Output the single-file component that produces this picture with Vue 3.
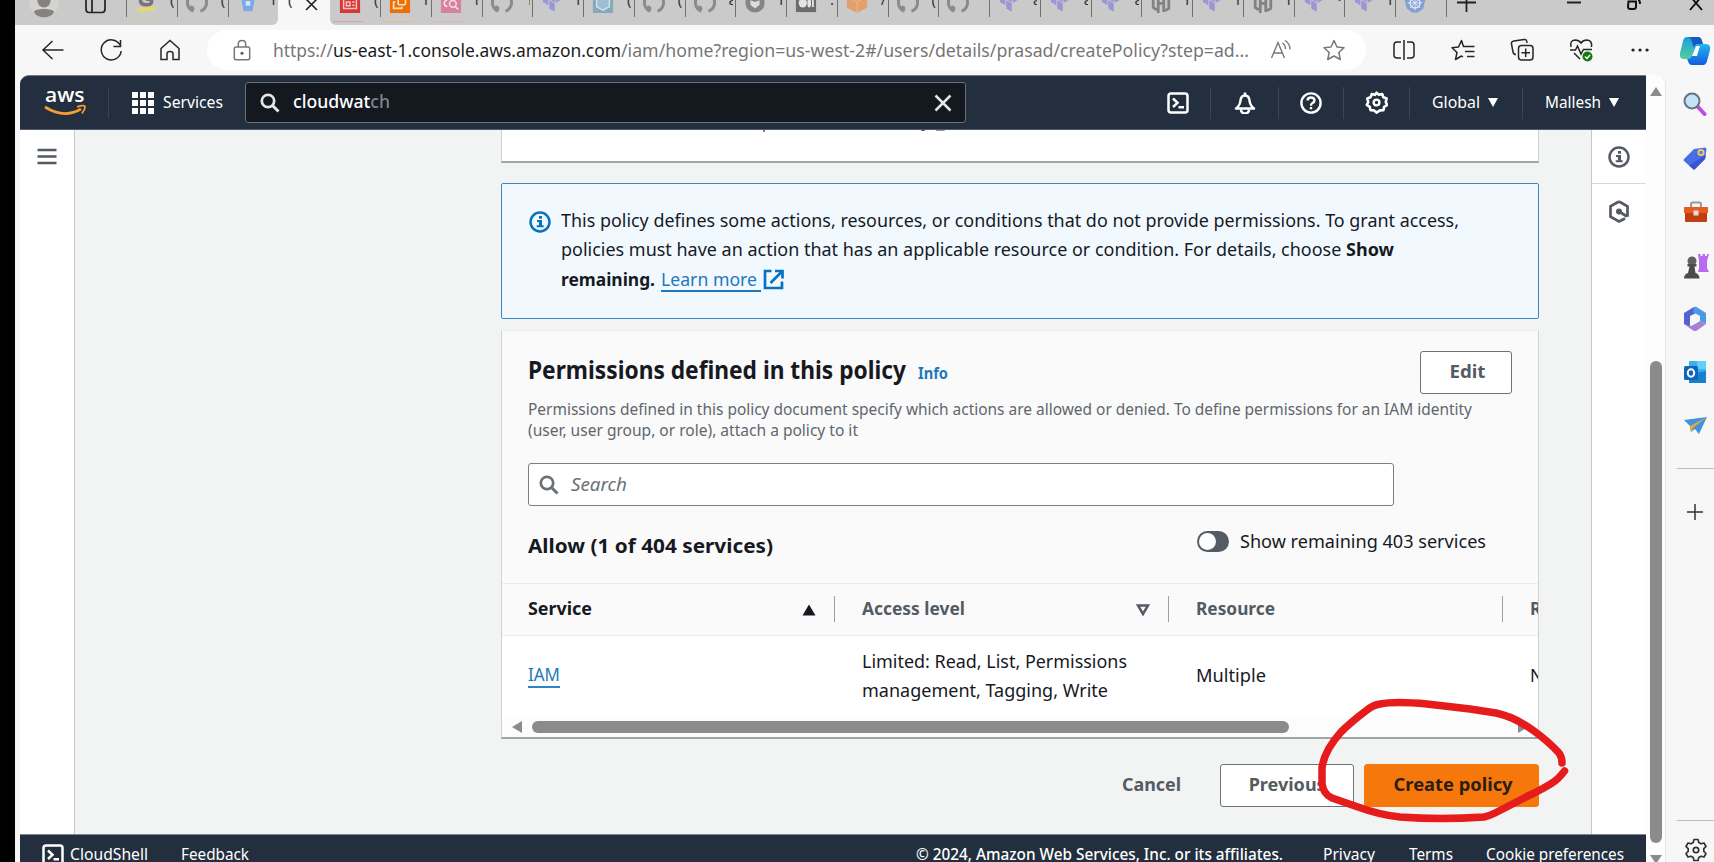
<script setup>
// Scales a run of text horizontally so that it takes the given width.
const vFit = {
  mounted(el, { value }) {
    el.style.display = 'inline-block'
    const natural = el.getBoundingClientRect().width
    el.style.width = value + 'px'
    el.style.transformOrigin = '0 50%'
    el.style.transform = `scaleX(${value / natural})`
  },
}

const tabsLeft = [
  { icon: 'g', mark: '(', line: 'yellow' },
  { icon: 'github', mark: '(' },
  { icon: 'bucket', mark: 'i' },
]
const tabsRight = [
  { icon: 'idcard', mark: '(', line: 'red' },
  { icon: 'ec2', mark: 'l', line: 'orange' },
  { icon: 'cw', mark: 'l', line: 'pink' },
  { icon: 'github', mark: '1' },
  { icon: 'tf', mark: 'l' },
  { icon: 'hexa', mark: '(' },
  { icon: 'github', mark: '(' },
  { icon: 'github', mark: 'a' },
  { icon: 'disc', mark: 'l' },
  { icon: 'medium', mark: ':' },
  { icon: 'cube', mark: '/' },
  { icon: 'github', mark: '(' },
  { icon: 'github', mark: '1' },
  { icon: 'tf', mark: 'a' },
  { icon: 'tf', mark: 'a' },
  { icon: 'tf', mark: 'a' },
  { icon: 'hashi', mark: 'l' },
  { icon: 'tf', mark: 'l' },
  { icon: 'hashi', mark: 'l' },
  { icon: 'tf', mark: '·' },
  { icon: 'tf', mark: 'l' },
  { icon: 'k8s', mark: '' },
]
</script>

<template>
  <div class="window">
    <svg class="defs" width="0" height="0">
      <defs>
        <symbol id="g" viewBox="0 0 24 24"><path d="M18 6v6q0 3-6 3t-6-5V4M12 9h6" fill="none" stroke="#77777a" stroke-width="4" /><path d="M2 19l20-2v4L4 23z" fill="#e8d95e" /></symbol>
        <symbol id="github" viewBox="0 0 24 24"><path d="M8.200 22A10 10 0 0 1 4 6M15.800 22A10 10 0 0 0 20 6M9 18.500q-2.500.5-4-2" fill="none" stroke="#8b8b8b" stroke-width="3.300" /></symbol>
        <symbol id="bucket" viewBox="0 0 24 24"><path d="M4 5h16l-3 17H7z" fill="#7ba9e8" /><rect x="9.500" y="11" width="5" height="5" fill="#d5e3f5" /></symbol>
        <symbol id="idcard" viewBox="0 0 24 24"><path d="M1 0h22v24H1z" fill="#d93636" /><path d="M5 8h14v11H5zM8 16v-4h4v4zM14.500 12H17M14.500 15.500H17" fill="none" stroke="#f3c8c8" stroke-width="1.600" /></symbol>
        <symbol id="ec2" viewBox="0 0 24 24"><path d="M1 0h22v24H1z" fill="#ed7100" /><rect x="10" y="7" width="8" height="8" rx="1" fill="none" stroke="#fbe0c4" stroke-width="1.800" /><path d="M7 12H5v7h9v-2" fill="none" stroke="#fbe0c4" stroke-width="1.800" /></symbol>
        <symbol id="cw" viewBox="0 0 24 24"><path d="M1 0h22v24H1z" fill="#d7809f" /><circle cx="14" cy="14" r="3.700" fill="none" stroke="#f5dbe5" stroke-width="1.700" /><path d="M16.500 17l3.500 3M8 17c-5-1-4-7 0-7" fill="none" stroke="#f5dbe5" stroke-width="1.700" /></symbol>
        <symbol id="tf" viewBox="0 0 24 24"><path d="M2 6l6 3.500v6L2 12zM9 10l6 3.500v9L9 19zM16 13l6-3.500v-5L16 8z" fill="#9b96d6" /><path d="M9 3l6 3.500v6L9 9z" fill="#9b96d6" /></symbol>
        <symbol id="hexa" viewBox="0 0 24 24"><path d="M1 0h22v24H1z" fill="#85a8ba" /><path d="M12 4l7 4v9l-7 4-7-4V8z" fill="#9cbfd1" stroke="#d4e3ea" stroke-width="1.500" /></symbol>
        <symbol id="disc" viewBox="0 0 24 24"><circle cx="12" cy="13" r="10.500" fill="#858585" /><path d="M7 10l5 2 5-2v5l-5 4-5-4z" fill="#ddd" /></symbol>
        <symbol id="medium" viewBox="0 0 24 24"><path d="M1 2h22v21H1z" fill="#6c6c6c" /><ellipse cx="8.500" cy="13" rx="4.500" ry="5" fill="#e4e4e4" /><ellipse cx="15.500" cy="13" rx="2" ry="5" fill="#e4e4e4" /><path d="M19.500 8.500v9" stroke="#e4e4e4" stroke-width="2" /></symbol>
        <symbol id="cube" viewBox="0 0 24 24"><path d="M12 1l11 5v12l-11 6-11-6V6z" fill="#e3a06d" /><path d="M12 12v12M12 12l11-6M12 12L1 6" stroke="#edb98f" /></symbol>
        <symbol id="hashi" viewBox="0 0 24 24"><path d="M3.500 5v13l4 2.500M9 4v20M15 3v20M20.500 7v12l-4 2.500M9 13.500h6" fill="none" stroke="#828282" stroke-width="3" /></symbol>
        <symbol id="k8s" viewBox="0 0 24 24"><path d="M6 2h12l5 8-2 9-6 4.500H9L3 19 1 10z" fill="#7f9fd5" /><circle cx="12" cy="13" r="5.500" fill="none" stroke="#e4eaf5" stroke-width="1.500" /><path d="M12 5v16M4 13h16M6.500 7.500l11 11M17.500 7.500l-11 11" stroke="#e4eaf5" /></symbol>
        <symbol id="shell" viewBox="0 0 22 22"><rect x="1.500" y="1.500" width="19" height="19" rx="2.500" fill="none" stroke="currentColor" stroke-width="2.500" /><path d="M6 6.500l4.500 4.300L6 15M11.500 15.200H17" fill="none" stroke="currentColor" stroke-width="2.500" /></symbol>
        <symbol id="lens" viewBox="0 0 20 20"><circle cx="8" cy="8" r="6.200" fill="none" stroke="currentColor" stroke-width="2.700" /><path d="M12.500 12.500l6 6" stroke="currentColor" stroke-width="3" /></symbol>
        <symbol id="info" viewBox="0 0 22 22"><circle cx="11" cy="11" r="9.500" fill="none" stroke="currentColor" stroke-width="2.500" /><path d="M10 5h3v2.700h-3zM8 9h5v5.200h1.700v2H7.700v-2h2.200V11H8z" fill="currentColor" /></symbol>
      </defs>
    </svg>

    <div class="edge"></div>
    <div class="browser">
      <div class="tabstrip">
        <div class="strip-left">
          <svg class="avatar" width="30" height="20" viewBox="0 0 30 20"><circle cx="15" cy="3" r="14.500" fill="#d5d3d0" /><circle cx="15" cy="1" r="6.500" fill="#858280" /><path d="M5 12c0-4 20-4 20 0-3 7-17 7-20 0z" fill="#858280" /></svg>
          <svg class="panel-ico" width="21" height="14" viewBox="0 0 21 14"><path d="M1 0v9q0 3.500 3 3.500h13q3 0 3-3.500V0M7 0v12" fill="none" stroke="#222" stroke-width="1.700" /></svg>
          <div v-for="(t, i) in tabsLeft" :key="i" class="tab">
            <svg class="fav" width="22" height="24"><use :href="'#' + t.icon" /></svg>
            <span class="mark">{{ t.mark }}</span>
            <i v-if="t.line" class="line" :class="t.line"></i>
          </div>
        </div>
        <div class="tab-active">
          <span class="mark">(</span>
          <svg width="13" height="13" viewBox="0 0 13 13"><path d="M1 0l11 11M12 0L1 11" stroke="#222" stroke-width="1.600" /></svg>
        </div>
        <div class="strip-right">
          <div v-for="(t, i) in tabsRight" :key="i" class="tab" :class="{ bare: i === 0 }">
            <svg class="fav" width="22" height="24"><use :href="'#' + t.icon" /></svg>
            <span class="mark">{{ t.mark }}</span>
            <i v-if="t.line" class="line" :class="t.line"></i>
          </div>
          <div class="tab-end"></div>
          <svg class="win-ico" width="260" height="14" viewBox="0 0 260 14">
            <path d="M2 2.500h19M11.500 0v12M112 2.500h14" stroke="#222" stroke-width="1.800" />
            <path d="M173.500 1.500h7.500v5q0 2.500-2.500 2.500h-3q-2.500 0-2.500-2.500zM183 0q2 0 2 4" fill="none" stroke="#111" stroke-width="2" />
            <path d="M235 10L247 -4M247 10L235 -4" stroke="#111" stroke-width="1.900" />
          </svg>
        </div>
      </div>

      <div class="toolbar">
        <div class="nav-icons">
          <svg width="24" height="24" viewBox="0 0 24 24"><path d="M11.500 3L2 12l9.500 9M2 12h20.500" /></svg>
          <svg width="24" height="24" viewBox="0 0 24 24"><path d="M21 7a10 10 0 1 0 1.200 6M21.500 2v6.500h-7" /></svg>
          <svg width="24" height="24" viewBox="0 0 24 24"><path d="M3 10.500L12 2.500l9 8v11h-6v-6q0-2-3-2t-3 2v6H3z" /></svg>
        </div>
        <div class="address">
          <svg class="lock" width="18" height="22" viewBox="0 0 18 22"><path d="M3 8h12q1.700 0 1.700 1.700v9q0 2-1.700 2H3q-1.700 0-1.700-2v-9Q1.300 8 3 8zM5.300 8V5q0-3.500 3.700-3.500T12.700 5v3" fill="none" stroke="#777" stroke-width="1.500" /><circle cx="9" cy="14.300" r="1.500" fill="#555" /></svg>
          <span class="url"><span v-fit="60">https://</span><b v-fit="288">us-east-1.console.aws.amazon.com</b><span v-fit="628">/iam/home?region=us-west-2#/users/details/prasad/createPolicy?step=ad...</span></span>
          <svg class="read" width="22" height="22" viewBox="0 0 22 22"><path d="M1.500 19L8 3.500 14.500 19M4 14h8M12.500 4q3 2 3 6M15 1.500q5 3 5 9" fill="none" stroke="#777" stroke-width="1.400" /></svg>
          <svg class="star" width="24" height="24" viewBox="0 0 24 24"><path d="M12 2.500l3 6.500 7 .8-5.200 4.700 1.500 7L12 18l-6.300 3.500 1.500-7L2 9.800 9 9z" fill="none" stroke="#777" stroke-width="1.500" stroke-linejoin="round" /></svg>
        </div>
        <div class="tool-icons">
          <svg width="24" height="24" viewBox="0 0 24 24"><path d="M9 4H5Q2 4 2 7v10q0 3 3 3h4M15 4h4q3 0 3 3v10q0 3-3 3h-4M12 2v20" /></svg>
          <svg width="24" height="24" viewBox="0 0 24 24"><path d="M14 8.500h-1.500L10.500 2.500 7.500 9 1 9.800l5 4.700L4.500 21.500l6-3.500 1.500 1M14 8.500h9.500M14 13.500h9.500M16 18.500h7.500" stroke-linejoin="round" /></svg>
          <svg width="24" height="24" viewBox="0 0 24 24"><rect x="8.500" y="7.500" width="14.500" height="14.500" rx="3" /><path d="M15.700 10.500v8.500M11.500 14.700H20M17 5q0-4-3-3.500L4 3Q1 3.500 1.500 6L3 14q.5 2.500 3 2.500" /></svg>
          <svg width="24" height="24" viewBox="0 0 24 24"><path d="M2 9q-1.500-6.500 4-7 4 0 6 3 2-3 6-3 5.500.5 4.500 7M1 12h5.500l2-4 3.500 8 2.500-4.500H23M5 15l6 6" /><circle cx="18.500" cy="18.500" r="5" fill="#107c10" stroke="none" /><path d="M16 18.500l2 2 3-3.500" stroke="#fff" /></svg>
          <svg width="24" height="24" viewBox="0 0 24 24"><path d="M5 12h.1M12 12h.1M19 12h.1" stroke-width="3.200" stroke-linecap="round" /></svg>
        </div>
        <svg class="copilot" width="32" height="32" viewBox="0 0 32 32">
          <defs>
            <linearGradient id="cpa" x1="0" y1="0" x2="0" y2="1"><stop offset="0" stop-color="#1b9ee0" /><stop offset="1" stop-color="#54cf9a" /></linearGradient>
            <linearGradient id="cpb" x1="0" y1="0" x2="0" y2="1"><stop offset="0" stop-color="#22b8f0" /><stop offset="1" stop-color="#1559e0" /></linearGradient>
          </defs>
          <path d="M8 2h11q3 0 4 4l1 3h-5q-3 0-4 4l-2 7q-1 4-4 4H5q-5 0-4-6L4 6q1-4 4-4z" fill="url(#cpa)" />
          <path d="M24 9h3q5 0 4 6l-3 11q-1 4-4 4H13q-3 0-4-4l-1-2q4 0 5-4l2-7q1-4 4-4z" fill="url(#cpb)" />
          <path d="M19 2q3 0 4 4l1 3h-5q-3 0-4 4L12 4q-1-2-3-2z" fill="#1a58c4" />
          <path d="M17 11h4l-3 10h-5z" fill="#f6fbff" />
        </svg>
      </div>

      <div class="lower">
        <div class="console">
          <header class="awsnav">
            <svg class="aws" width="43" height="30" viewBox="0 0 43 30"><text x="1" y="13.500" font-size="20.500" textLength="39.500" lengthAdjust="spacingAndGlyphs" fill="#fff" class="aws-word">aws</text><path d="M1 19q19 12 36 2" fill="none" stroke="#f79b34" stroke-width="2.700" /><path d="M33 18.800q8-2.500 8 0 0 3-3 6.500" fill="none" stroke="#f79b34" stroke-width="1.800" /></svg>
            <i class="vline first"></i>
            <svg class="grid" width="22" height="22" viewBox="0 0 22 22"><path d="M0 0h6v6H0zM8 0h6v6H8zM16 0h6v6h-6zM0 8h6v6H0zM8 8h6v6H8zM16 8h6v6h-6zM0 16h6v6H0zM8 16h6v6H8zM16 16h6v6h-6z" fill="#fff" /></svg>
            <span class="services"><span v-fit="60">Services</span></span>
            <div class="navsearch">
              <svg width="20" height="20" class="ns-lens"><use href="#lens" /></svg>
              <span class="ns-text" v-fit="97">cloudwat<em>ch</em></span>
              <svg class="ns-x" width="18" height="18" viewBox="0 0 18 18"><path d="M1.500 1.500l15 15M16.500 1.500l-15 15" stroke="#e3e6ea" stroke-width="2.500" /></svg>
            </div>
            <div class="navright">
              <div class="cell c1"><svg width="22" height="22"><use href="#shell" /></svg></div>
              <div class="cell c2"><svg width="22" height="22" viewBox="0 0 22 22"><path d="M2 16.500q4-3 4.500-8Q7 3.500 11 3.500t4.500 5q.5 5 4.500 8z" fill="none" stroke="#fff" stroke-width="2.500" stroke-linejoin="round" /><path d="M11 .5v3M7 17.500a4 4 0 0 0 8 0" fill="none" stroke="#fff" stroke-width="2.600" /></svg></div>
              <div class="cell c3"><svg width="22" height="22" viewBox="0 0 22 22"><circle cx="11" cy="11" r="9.600" fill="none" stroke="#fff" stroke-width="2.400" /><path d="M7.500 8.500Q7.700 5.500 11 5.500t3.500 3q0 1.500-2 2.500-1.500.7-1.500 2.700M11 15v2.300" fill="none" stroke="#fff" stroke-width="2.400" /></svg></div>
              <div class="cell c4"><svg width="23" height="23" viewBox="0 0 24 24"><path d="M12 1.800l2.500 2.200 3.500-.8 1.200 3.400 3.400 1.300-1 3.600 1.500 3.100-3.100 2-.8 3.500-3.600.1L12 22.500l-2.600-2.300-3.600-.1-.8-3.500-3.100-2L3.400 11.500l-1-3.600 3.400-1.300L7 3.200l3.500.8z" fill="none" stroke="#fff" stroke-width="2.700" stroke-linejoin="round" /><circle cx="12" cy="12" r="3" fill="none" stroke="#fff" stroke-width="2.600" /></svg></div>
              <div class="cell c5"><span v-fit="48">Global</span><i class="caret"></i></div>
              <div class="cell c6"><span v-fit="56">Mallesh</span><i class="caret"></i></div>
            </div>
          </header>

          <div class="workspace">
            <aside class="leftbar">
              <svg width="20" height="18" viewBox="0 0 20 18"><path d="M.5 2h19M.5 8.500h19M.5 15h19" stroke="#545b64" stroke-width="2.500" /></svg>
            </aside>

            <main class="content">
              <section class="card prev"><pre class="code">p                /@ _</pre></section>

              <section class="alert">
                <svg class="alert-ico" width="22" height="22"><use href="#info" /></svg>
                <div class="alert-body">
                  <div><span v-fit="898">This policy defines some actions, resources, or conditions that do not provide permissions. To grant access,</span></div>
                  <div><span v-fit="785">policies must have an action that has an applicable resource or condition. For details, choose </span><b v-fit="48">Show</b></div>
                  <div class="last"><b v-fit="94">remaining.</b><a class="learn"><span v-fit="96">Learn more</span></a>
                    <svg width="21" height="21" viewBox="0 0 21 21"><path d="M8.500 2H2v17h17v-6.500M12 2h7.500v7.500M19 2.500L7.500 14" fill="none" stroke="#0972c0" stroke-width="2.700" /></svg></div>
                </div>
              </section>

              <section class="card perms">
                <div class="head">
                  <h2><span v-fit="378">Permissions defined in this policy</span></h2>
                  <a class="infolink" v-fit="30">Info</a>
                  <button class="btn edit"><span v-fit="36">Edit</span></button>
                </div>
                <p class="desc"><span v-fit="944">Permissions defined in this policy document specify which actions are allowed or denied. To define permissions for an IAM identity</span><br><span v-fit="330">(user, user group, or role), attach a policy to it</span></p>
                <div class="search">
                  <svg width="20" height="20"><use href="#lens" /></svg>
                  <span v-fit="56">Search</span>
                </div>
                <div class="allow">
                  <h3 v-fit="245">Allow (1 of 404 services)</h3>
                  <div class="toggle-row"><i class="toggle"></i><span v-fit="246">Show remaining 403 services</span></div>
                </div>
                <div class="row thead">
                  <div class="col a dark"><b v-fit="64">Service</b><svg width="14" height="12" viewBox="0 0 14 12"><path d="M7 .5L13.500 11.500H.5z" fill="#16191f" /></svg></div>
                  <div class="col b"><b v-fit="103">Access level</b><svg width="14" height="12" viewBox="0 0 14 12"><path d="M2 1.500h10L7 10z" fill="none" stroke="#545b64" stroke-width="2.500" /></svg></div>
                  <div class="col c"><b v-fit="79">Resource</b></div>
                  <div class="col d"><b>Request condition</b></div>
                </div>
                <div class="row tbody">
                  <div class="col a"><a class="iam"><span v-fit="32">IAM</span></a></div>
                  <div class="col b two"><span v-fit="265">Limited: Read, List, Permissions</span><span v-fit="246">management, Tagging, Write</span></div>
                  <div class="col c"><span v-fit="70">Multiple</span></div>
                  <div class="col d"><span>None</span></div>
                </div>
                <div class="hscroll"><i class="larr"></i><i class="thumb"></i><i class="rarr"></i></div>
              </section>

              <div class="actions">
                <span class="cancel" v-fit="59">Cancel</span>
                <button class="btn previous"><span v-fit="77">Previous</span></button>
                <button class="btn create"><span v-fit="119">Create policy</span></button>
              </div>
            </main>

            <aside class="rightbar">
              <div class="rb"><svg width="22" height="22"><use href="#info" /></svg></div>
              <div class="rb"><svg width="22" height="23" viewBox="0 0 22 23"><path d="M11 1.500l8.500 4.700v10.600M17 18.500L11 21.500l-8.500-4.700V6.200L11 1.500M11 11.500l8 5" fill="none" stroke="#545b64" stroke-width="2.700" /><circle cx="11" cy="11.500" r="3" fill="#545b64" /></svg></div>
            </aside>
          </div>

          <footer class="awsfoot">
            <svg width="22" height="22"><use href="#shell" /></svg>
            <span class="f1" v-fit="78">CloudShell</span>
            <span class="f2" v-fit="68">Feedback</span>
            <span class="f3" v-fit="367">© 2024, Amazon Web Services, Inc. or its affiliates.</span>
            <span class="f4" v-fit="52">Privacy</span>
            <span class="f5" v-fit="44">Terms</span>
            <span class="f6" v-fit="138">Cookie preferences</span>
          </footer>
        </div>

        <div class="vscroll"><i class="up"></i><i class="vthumb"></i><i class="down"></i></div>

        <aside class="sidebar">
          <svg class="s1" width="24" height="24" viewBox="0 0 24 24"><path d="M15 15l6.500 7" stroke="#b84fe0" stroke-width="4" stroke-linecap="round" /><circle cx="9" cy="9" r="7.500" fill="#c5e2f6" stroke="#66727e" stroke-width="2" /></svg>
          <svg class="s2" width="24" height="24" viewBox="0 0 24 24"><path d="M11 3l11-1.500q1.500 0 1.500 2L22 13 12 23q-1 1-2 0L1 15q-1-1 0-2z" fill="#4a6ee8" /><path d="M23 9l-1 4-10 10q-1 1-2 0L6 19.500z" fill="#3755d0" /><circle cx="18" cy="6.500" r="2.700" fill="#6c7edb" stroke="#f3cf55" stroke-width="1.700" /></svg>
          <svg class="s3" width="26" height="22" viewBox="0 0 26 22"><path d="M8 6V3q0-1.500 1.500-1.500h7Q18 1.500 18 3v3" fill="none" stroke="#999" stroke-width="2" /><path d="M1 6h24v6H1z" fill="#e65a24" /><path d="M2 12h22v8q0 1-1 1H3q-1 0-1-1z" fill="#c43d10" /><rect x="10.500" y="9.500" width="5" height="5" fill="#ddd" /></svg>
          <svg class="s4" width="26" height="26" viewBox="0 0 26 26"><path d="M15 1h2.500v2h2V1h2.500v2h2V1H26l-2 7 0 7 2 4H15l1-4V8z" fill="#b76cf0" /><circle cx="9" cy="8" r="4.500" fill="#606060" /><path d="M4.500 11h9v2.500h-2l1 6.500q4 1 4 5.500H1q0-4.500 4-5.500l1.500-6.500h-2z" fill="#4b4b4b" /></svg>
          <svg class="s5" width="24" height="26" viewBox="0 0 24 26"><path d="M11 1L1 7v11l6 3V10l6-3 2-4z" fill="#5561cf" /><path d="M11 1q2-1 4 1l8 5v11l-6-3v-5l-7-4z" fill="#4a9be4" /><path d="M1 18l7 2 4-2 5-3 6 3-9 6.500q-2 1-4 0z" fill="#a67fd6" /><circle cx="12" cy="13" r="4.300" fill="#f7f7f7" /></svg>
          <svg class="s6" width="24" height="24" viewBox="0 0 24 24"><path d="M6 1h17v22H6z" fill="#35b2ec" /><path d="M14 1h9v8h-9z" fill="#5fd0fa" /><path d="M6 14l17-3v12H6z" fill="#1781d0" /><rect x="1" y="6" width="14" height="14" rx="1.500" fill="#0f65b8" /><ellipse cx="8" cy="13" rx="3.200" ry="3.700" fill="none" stroke="#fff" stroke-width="2" /></svg>
          <svg class="s7" width="26" height="20" viewBox="0 0 26 20"><path d="M1 4l23-3-8 17-4-5-4 3-1-6z" fill="#3c94e3" /><path d="M24 1L7 10l1 6 3-5z" fill="#f3a52e" /></svg>
          <i class="sline"></i>
          <svg class="s8" width="18" height="18" viewBox="0 0 18 18"><path d="M9 1v16M1 9h16" stroke="#333" stroke-width="1.500" /></svg>
          <i class="sline two"></i>
          <svg class="s9" width="24" height="24" viewBox="0 0 24 24"><path d="M10 1.500h4l.8 3 2.200 1.300 3-.8 2 3.500-2.200 2.200v2.600L22 15.500 20 19l-3-.8-2.200 1.300-.8 3h-4l-.8-3L7 18.200 4 19l-2-3.500 2.200-2.200v-2.600L2 8.500 4 5l3 .8 2.200-1.300z" fill="none" stroke="#333" stroke-width="1.700" stroke-linejoin="round" /><circle cx="12" cy="12" r="2.700" fill="none" stroke="#333" stroke-width="1.700" /></svg>
        </aside>
      </div>
    </div>

    <svg class="scribble" width="260" height="134" viewBox="1312 694 260 134">
      <path d="M1562 763Q1562 757 1559 753Q1548 741 1534 731Q1515 717 1496 713L1470 709L1427 704Q1395 701 1380 704Q1373 705 1367 710Q1351 722 1341 732Q1324 751 1322 768V783Q1323 794 1332 798L1358 807Q1380 815 1400 817Q1440 820 1484 817Q1489 816 1495 813L1526 797Q1547 787 1555 781Q1559 778 1564.500 771" />
    </svg>
  </div>
</template>

<style>
body { margin: 0; overflow: hidden; }
</style>

<style scoped>
* { box-sizing: border-box; }
.window { position: relative; display: flex; width: 1714px; height: 862px; overflow: hidden; background: #f7f7f7; font-family: "Noto Sans", "Open Sans", sans-serif; font-size: 17.3px; color: #16191f; white-space: pre; }
.window div, .window svg, .window section, .window i { flex-shrink: 0; }
.defs { position: absolute; }
svg { display: block; }
h2, h3, p, pre { margin: 0; }
.edge { width: 15px; background: #000; }
.browser { width: 1699px; display: flex; flex-direction: column; }

.tabstrip { display: flex; height: 25px; overflow: hidden; background: #f7f7f7; }
.strip-left, .strip-right { display: flex; height: 25px; background: #cacaca; overflow: hidden; }
.strip-left { width: 263px; border-bottom-right-radius: 6px; }
.strip-right { width: 1384px; border-bottom-left-radius: 6px; }
.avatar { margin-left: 14px; }
.panel-ico { margin: 0 20px 0 26px; }
.tab { position: relative; width: 50.75px; height: 17px; display: flex; border-left: 1.500px solid #707070; }
.tab.bare { border-color: transparent; width: 50px; }
.fav { margin: -10px 0 0 8px; }
.mark { margin: -11px 0 0 13px; width: 4px; height: 20px; overflow: hidden; font-size: 15px; line-height: 20px; color: #333; }
.line { position: absolute; left: 2px; top: 21px; width: 30px; height: 1px; }
.yellow { background: #d9cf9a; }
.red { background: #e0a0a0; }
.orange { background: #e6b98e; }
.pink { background: #d9b3bd; }
.tab-end { width: 2px; height: 17px; border-left: 1.500px solid #707070; }
.win-ico { margin-left: 7px; }
.tab-active { width: 52px; display: flex; background: #f7f7f7; }
.tab-active .mark { margin-left: 10px; margin-right: 12px; width: 5px; }
.tab-active svg { margin-top: -1px; }

.toolbar { height: 50px; display: flex; align-items: center; background: #f7f7f7; }
.nav-icons { display: flex; gap: 34.500px; margin-left: 25.500px; width: 166.500px; }
.nav-icons svg, .tool-icons svg { fill: none; stroke: #262626; stroke-width: 1.500; }
.address { width: 1159px; height: 40px; border-radius: 20px; background: #fff; display: flex; align-items: center; }
.lock { margin-left: 26px; }
.url { margin-left: 22px; width: 978px; font-size: 18.500px; line-height: 40px; color: #767676; }
.url b { font-weight: 400; color: #1b1b1b; }
.read { margin-left: 19px; }
.star { margin-left: 30px; }
.tool-icons { display: flex; gap: 35.200px; margin-left: 25.500px; width: 287.500px; }
.copilot { margin-top: 2px; }

.lower { display: flex; height: 787px; }
.console { margin-left: 5px; width: 1626px; display: flex; flex-direction: column; }
.awsnav { height: 55px; display: flex; align-items: center; background: #232f3e; border-radius: 9px 0 0 0; border-top: 1px solid #71797f; border-bottom: 1px solid #525d69; color: #fff; }
.aws { margin-left: 24px; }
.aws-word { font-family: "Open Sans", sans-serif; font-weight: 600; }
.vline.first { margin-left: 21px; width: 1px; height: 30px; background: #39444f; }
.grid { margin-left: 23px; }
.services { margin: -2px 0 0 9px; width: 82px; font-size: 15.700px; }
.navsearch { width: 721px; height: 41px; background: #14181f; border: 1.500px solid #687078; border-radius: 3px; display: flex; align-items: center; }
.ns-lens { margin-left: 14px; color: #e3e6ea; }
.ns-text { margin: -2px 0 0 13px; font-weight: 500; }
.ns-text em { font-style: normal; color: #7c868f; }
.ns-x { margin-left: auto; margin-right: 13px; }
.navright { display: flex; margin-left: 179px; font-size: 15.700px; }
.cell { height: 32px; display: flex; align-items: center; justify-content: center; border-left: 1px solid #3a4653; }
.c1 { width: 65px; border-color: transparent; }
.c2 { width: 68px; }
.c3 { width: 65px; }
.c4 { width: 66px; }
.c5 { width: 113px; padding-right: 2px; }
.c6 { width: 121px; padding-right: 3px; }
.cell span { margin-top: -2px; }
.caret { margin-left: 8px; border: 5.500px solid transparent; border-top: 9px solid #fff; border-bottom: 0; }

.workspace { height: 704px; display: flex; overflow: hidden; }
.leftbar { width: 55px; background: #fff; border-right: 1.500px solid #c5c8ca; padding: 18px 0 0 17px; }
.content { width: 1516px; background: #f2f3f3; padding-left: 426px; }
.rightbar { width: 55px; background: #fff; border-left: 1.500px solid #c3c7c9; color: #545b64; }
.rb { height: 54px; display: flex; align-items: center; justify-content: center; }
.rb:first-child { border-bottom: 1px solid #d5dbdb; }
.card { width: 1038px; background: #fff; border: 1px solid #cfd2d4; border-top-color: #eaeded; border-bottom: 2px solid #a0a5a6; overflow: hidden; }
.prev { height: 33px; border-top: 0; margin-bottom: 20px; }
.code { margin: -15px 0 0 260px; font: 14.500px/20px "Liberation Mono", monospace; color: #444; }
.alert { width: 1038px; height: 136px; border: 1px solid #3c87bf; border-radius: 2px; background: #f1f9ff; display: flex; margin-bottom: 11px; }
.alert-ico { margin: 27px 0 0 26.500px; color: #0972c0; }
.alert-body { margin: 22px 0 0 10px; line-height: 29.500px; }
.alert-body > div { height: 29.300px; display: flex; }
.learn { margin: 0 2px 0 6px; color: #1f78bd; height: 27px; padding-right: 4px; border-bottom: 2px solid #1f78bd; }
.last svg { margin-top: 4px; }

.perms { height: 409px; border-radius: 1px; background: #fafafa; }
.head { display: flex; height: 62px; padding: 20px 26px 0 26px; }
h2 { font-size: 24.500px; line-height: 38px; }
.infolink { margin: 11px 0 0 12px; font-size: 15.200px; line-height: 22px; font-weight: 700; color: #1f78bd; }
.btn { font: 700 17.300px "Noto Sans", sans-serif; height: 43px; padding: 0 1px 2px 0; border: 1.500px solid #6c7278; border-radius: 3px; background: #fff; color: #545b64; display: flex; align-items: center; justify-content: center; }
.edit { width: 92px; margin-left: auto; }
.desc { margin: 6px 0 0 26px; font-size: 15.800px; line-height: 21.300px; height: 64px; color: #5f666d; }
.search { margin-left: 26px; width: 866px; height: 43px; background: #fff; border: 1.500px solid #7a7f85; border-radius: 3px; display: flex; align-items: center; gap: 12px; padding-left: 10px; color: #687078; font-style: italic; }
.allow { height: 77px; display: flex; padding-left: 26px; }
h3 { margin-top: 26px; font-size: 20px; line-height: 28px; }
.toggle-row { display: flex; align-items: center; height: 24px; margin: 23px 0 0 424px; gap: 10.500px; }
.toggle { width: 32px; height: 21px; border-radius: 11px; background: #545b64; padding: 2px; }
.toggle::before { content: ""; display: block; width: 17px; height: 17px; border-radius: 50%; background: #fff; }
.row { display: flex; width: 1100px; padding-left: 26px; border-top: 1px solid #eaeded; }
.thead { height: 52px; color: #545b64; }
.tbody { height: 83px; background: #fff; padding-bottom: 3px; }
.col { display: flex; align-items: center; }
.thead b { margin-top: -2px; }
.a, .b { width: 334px; }
.dark { color: #16191f; }
.thead .col { position: relative; }
.thead svg { margin-left: auto; margin-right: 46px; }
.thead .a::after, .thead .b::after, .thead .c::after { content: ""; width: 1.500px; height: 26px; background: #9aa0a4; position: absolute; right: 27px; top: 12px; }
.c { width: 334px; }
.col.two { flex-direction: column; align-items: flex-start; line-height: 29.300px; padding-top: 11px; }
.iam { color: #1f78bd; line-height: 23px; border-bottom: 2px solid #2f83c3; }
.hscroll { height: 20px; background: #fcfcfc; display: flex; align-items: center; padding-left: 10px; margin-top: -1px; }
.larr { border: 6.500px solid transparent; border-right: 10px solid #8b8b8b; border-left: 0; }
.thumb { margin-left: 10px; width: 757px; height: 12px; border-radius: 6px; background: #8b8b8b; }
.rarr { margin-left: 229px; border: 6.500px solid transparent; border-left: 10px solid #8b8b8b; border-right: 0; }
.actions { width: 1038px; margin-top: 25px; display: flex; align-items: center; justify-content: flex-end; }
.cancel { margin-top: -2px; font-weight: 700; color: #545b64; }
.previous { width: 134px; margin: 0 10px 0 39px; padding-right: 3px; }
.create { width: 175px; padding-right: 5px; background: #f6780d; border-color: #f6780d; color: #2b1d10; }

.awsfoot { height: 28px; background: #232f3e; border-top: 1px solid #7c868c; color: #fff; display: flex; font-size: 15.700px; line-height: 38px; overflow: hidden; }
.awsfoot svg { margin: 9px 6px 0 22px; }
.f2 { margin-left: 33px; }
.f3 { margin-left: 667px; font-weight: 500; }
.f4 { margin-left: 40px; }
.f5 { margin-left: 34px; }
.f6 { margin-left: 33px; }

.vscroll { width: 20px; background: #fdfdfd; display: flex; flex-direction: column; align-items: center; border-top-right-radius: 9px; border-right: 1px solid #e6e6e6; }
.up { margin-top: 12px; border: 6.500px solid transparent; border-bottom: 9px solid #8b8b8b; border-top: 0; }
.vthumb { margin: 265px 0 12px; width: 12px; height: 482px; border-radius: 6px; background: #8b8b8b; }
.down { border: 6.500px solid transparent; border-top: 9px solid #8b8b8b; border-bottom: 0; }

.sidebar { width: 48px; display: flex; flex-direction: column; align-items: flex-start; padding: 17px 0 0 17px; overflow: hidden; }
.s2 { margin-top: 30px; }
.s3 { margin-top: 31px; }
.s4 { margin-top: 30px; }
.s5 { margin-top: 27px; }
.s6 { margin-top: 28px; }
.s7 { margin-top: 32px; }
.sline { margin: 32px 0 0 -6px; width: 40px; height: 1px; background: #bdbdbd; }
.s8 { margin: 34px 0 0 3px; }
.sline.two { margin-top: 299px; }
.s9 { margin: 17px 0 0 1px; }

.scribble { position: absolute; left: 1312px; top: 694px; }
.scribble path { fill: none; stroke: #e61c1c; stroke-width: 7.500; stroke-linecap: round; stroke-linejoin: round; }
</style>
